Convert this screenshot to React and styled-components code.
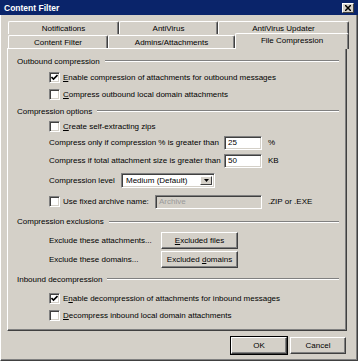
import styled, { createGlobalStyle } from "styled-components";

const GlobalStyle = createGlobalStyle`
  body {
    margin: 0;
    font-family: "Liberation Sans", Arial, sans-serif;
    font-size: 8px;
    color: #000;
  }
`;

const Window = styled.div`
  width: 358px;
  height: 361px;
  box-sizing: border-box;
  background: #d4d0c8;
  display: flex;
  flex-direction: column;
  border-left: 1px solid #fff;
  border-right: 1px solid #404040;
  border-bottom: 1px solid #404040;
  box-shadow: inset -1px -1px #808080;
`;

const TitleBar = styled.div`
  height: 15px;
  margin-left: -1px;
  margin-right: -1px;
  background: #0a246a;
  display: flex;
  align-items: center;
  justify-content: space-between;
  padding: 0 4px 0 4px;
`;

const Title = styled.span`
  color: #fff;
  font-weight: bold;
  font-size: 8.5px;
`;

const CloseButton = styled.div`
  width: 12px;
  height: 10px;
  box-sizing: border-box;
  background: #d4d0c8;
  border-top: 1px solid #fff;
  border-left: 1px solid #fff;
  border-right: 1px solid #404040;
  border-bottom: 1px solid #404040;
  display: flex;
  align-items: center;
  justify-content: center;
`;

const Body = styled.div`
  padding: 6px 10px 0 6px;
  display: flex;
  flex-direction: column;
`;

const TabRow = styled.div`
  display: flex;
  align-items: flex-end;
  height: ${(p) => p.h}px;
  padding-left: 1px;
`;

const Tab = styled.div`
  width: ${(p) => p.w}px;
  height: ${(p) => (p.active ? 16 : 13)}px;
  box-sizing: border-box;
  flex-shrink: 0;
  display: flex;
  align-items: center;
  justify-content: center;
  background: #d4d0c8;
  border-top: 1px solid #fff;
  border-left: 1px solid #fff;
  border-right: 1px solid #404040;
  border-radius: 2px 2px 0 0;
  box-shadow: inset -1px 0 #808080;
  position: relative;
  z-index: ${(p) => (p.active ? 2 : 1)};
  margin-bottom: ${(p) => (p.active ? -1 : 0)}px;
  padding-bottom: ${(p) => (p.active ? 2 : 0)}px;
`;

const Panel = styled.div`
  height: 283px;
  box-sizing: border-box;
  border-top: 1px solid #fff;
  border-left: 1px solid #fff;
  border-right: 1px solid #404040;
  border-bottom: 1px solid #404040;
  box-shadow: inset -1px -1px #808080;
  padding: 4px 7px 0 9px;
  display: flex;
  flex-direction: column;
`;

const Header = styled.div`
  height: ${(p) => p.h}px;
  display: flex;
  align-items: center;
  gap: 5px;
  white-space: nowrap;
`;

const Etch = styled.div`
  flex: 1;
  height: 0;
  border-top: 1px solid #808080;
  border-bottom: 1px solid #fff;
`;

const Row = styled.div`
  height: ${(p) => p.h}px;
  display: flex;
  align-items: center;
  padding-left: 32px;
  white-space: nowrap;
`;

const Label = styled.span`
  width: ${(p) => (p.w ? `${p.w}px` : "auto")};
  flex-shrink: 0;
`;

const CheckLabel = styled.label`
  display: flex;
  align-items: center;
  gap: 3px;
  width: ${(p) => (p.w ? `${p.w}px` : "auto")};
  flex-shrink: 0;
`;

const Box = styled.span`
  width: 11px;
  height: 11px;
  box-sizing: border-box;
  background: #fff;
  border-top: 1px solid #808080;
  border-left: 1px solid #808080;
  border-right: 1px solid #fff;
  border-bottom: 1px solid #fff;
  box-shadow: inset 1px 1px #404040, inset -1px -1px #d4d0c8;
  display: flex;
  align-items: center;
  justify-content: center;
`;

const U = styled.span`
  text-decoration: underline;
`;

const Field = styled.div`
  width: ${(p) => p.w}px;
  height: 14px;
  box-sizing: border-box;
  background: ${(p) => (p.disabled ? "#d4d0c8" : "#fff")};
  color: ${(p) => (p.disabled ? "#9a9a9a" : "#000")};
  border-top: 1px solid #808080;
  border-left: 1px solid #808080;
  border-right: 1px solid #fff;
  border-bottom: 1px solid #fff;
  box-shadow: inset 1px 1px #404040, inset -1px -1px #d4d0c8;
  padding-left: 3px;
  display: flex;
  align-items: center;
  flex-shrink: 0;
`;

const Unit = styled.span`
  margin-left: 6px;
`;

const Select = styled.div`
  width: 94px;
  height: 15px;
  box-sizing: border-box;
  background: #fff;
  border-top: 1px solid #808080;
  border-left: 1px solid #808080;
  border-right: 1px solid #fff;
  border-bottom: 1px solid #fff;
  box-shadow: inset 1px 1px #404040, inset -1px -1px #d4d0c8;
  padding: 2px 2px 2px 4px;
  display: flex;
  align-items: center;
  justify-content: space-between;
`;

const Arrow = styled.div`
  width: 12px;
  height: 100%;
  box-sizing: border-box;
  background: #d4d0c8;
  border-top: 1px solid #fff;
  border-left: 1px solid #fff;
  border-right: 1px solid #404040;
  border-bottom: 1px solid #404040;
  display: flex;
  align-items: center;
  justify-content: center;
`;

const Button = styled.button`
  width: ${(p) => p.w}px;
  height: 17px;
  box-sizing: border-box;
  padding: 0;
  font-family: "Liberation Sans", Arial, sans-serif;
  font-size: 8px;
  color: #000;
  background: #d4d0c8;
  border-top: 1px solid #fff;
  border-left: 1px solid #fff;
  border-right: 1px solid #404040;
  border-bottom: 1px solid #404040;
  box-shadow: inset -1px -1px #808080;
  outline: ${(p) => (p.primary ? "1px solid #000" : "none")};
  outline-offset: 0;
`;

const Footer = styled.div`
  display: flex;
  justify-content: flex-end;
  gap: 3px;
  margin-top: 6px;
  padding-right: 1px;
`;

const Check = ({ checked }) => (
  <Box>
    {checked && (
      <svg width="7" height="7" viewBox="0 0 7 7">
        <path d="M0.5 3 L2.5 5 L6.5 1" stroke="#000" strokeWidth="1.6" fill="none" />
      </svg>
    )}
  </Box>
);

export default function App() {
  return (
    <>
      <GlobalStyle />
      <Window>
        <TitleBar>
          <Title>Content Filter</Title>
          <CloseButton>
            <svg width="6" height="6" viewBox="0 0 6 6">
              <path d="M0 0 L6 6 M6 0 L0 6" stroke="#000" strokeWidth="1.5" />
            </svg>
          </CloseButton>
        </TitleBar>
        <Body>
          <TabRow h={13}>
            <Tab w={111}>Notifications</Tab>
            <Tab w={99}>AntiVirus</Tab>
            <Tab w={131}>AntiVirus Updater</Tab>
          </TabRow>
          <TabRow h={14}>
            <Tab w={100}>Content Filter</Tab>
            <Tab w={127}>Admins/Attachments</Tab>
            <Tab w={114} active>
              File Compression
            </Tab>
          </TabRow>
          <Panel>
            <Header h={16}>
              Outbound compression
              <Etch />
            </Header>
            <Row h={16}>
              <CheckLabel>
                <Check checked />
                <span>
                  <U>E</U>nable compression of attachments for outbound messages
                </span>
              </CheckLabel>
            </Row>
            <Row h={18}>
              <CheckLabel>
                <Check />
                <span>
                  <U>C</U>ompress outbound local domain attachments
                </span>
              </CheckLabel>
            </Row>
            <Header h={16}>
              Compression options
              <Etch />
            </Header>
            <Row h={15}>
              <CheckLabel>
                <Check />
                <span>
                  <U>C</U>reate self-extracting zips
                </span>
              </CheckLabel>
            </Row>
            <Row h={17}>
              <Label w={175}>Compress only if compression % is greater than</Label>
              <Field w={38}>25</Field>
              <Unit>%</Unit>
            </Row>
            <Row h={19}>
              <Label w={175}>Compress if total attachment size is greater than</Label>
              <Field w={38}>50</Field>
              <Unit>KB</Unit>
            </Row>
            <Row h={21}>
              <Label w={72}>Compression level</Label>
              <Select>
                <span>Medium (Default)</span>
                <Arrow>
                  <svg width="5" height="3" viewBox="0 0 5 3">
                    <path d="M0 0 H5 L2.5 3 Z" fill="#000" />
                  </svg>
                </Arrow>
              </Select>
            </Row>
            <Row h={21}>
              <CheckLabel w={106}>
                <Check />
                <span>Use fixed archive name:</span>
              </CheckLabel>
              <Field w={107} disabled>
                Archive
              </Field>
              <Unit>.ZIP or .EXE</Unit>
            </Row>
            <Header h={19}>
              Compression exclusions
              <Etch />
            </Header>
            <Row h={18}>
              <Label w={112}>Exclude these attachments...</Label>
              <Button w={77}>
                <U>E</U>xcluded files
              </Button>
            </Row>
            <Row h={20}>
              <Label w={112}>Exclude these domains...</Label>
              <Button w={77}>
                Excluded <U>d</U>omains
              </Button>
            </Row>
            <Header h={20}>
              Inbound decompression
              <Etch />
            </Header>
            <Row h={18}>
              <CheckLabel>
                <Check checked />
                <span>
                  E<U>n</U>able decompression of attachments for inbound messages
                </span>
              </CheckLabel>
            </Row>
            <Row h={17}>
              <CheckLabel>
                <Check />
                <span>
                  <U>D</U>ecompress inbound local domain attachments
                </span>
              </CheckLabel>
            </Row>
          </Panel>
          <Footer>
            <Button w={56} primary>
              OK
            </Button>
            <Button w={56}>Cancel</Button>
          </Footer>
        </Body>
      </Window>
    </>
  );
}
